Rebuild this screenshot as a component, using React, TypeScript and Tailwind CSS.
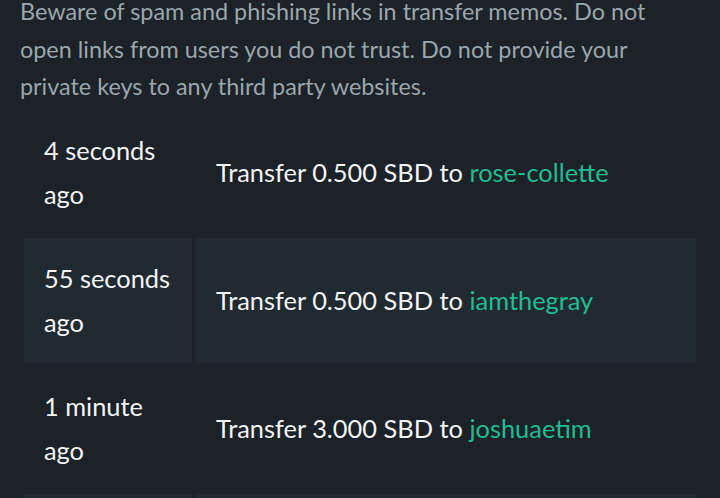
import React from 'react';

interface Transfer {
  when: string;
  amount: string;
  to: string;
}

const transfers: Transfer[] = [
  { when: '4 seconds ago', amount: '0.500 SBD', to: 'rose-collette' },
  { when: '55 seconds ago', amount: '0.500 SBD', to: 'iamthegray' },
  { when: '1 minute ago', amount: '3.000 SBD', to: 'joshuaetim' },
  { when: '2 minutes ago', amount: '1.000 SBD', to: 'steemitblog' },
];

const App: React.FC = () => {
  return (
    <div
      className="min-h-screen bg-[#1c2227] px-5 overflow-hidden"
      style={{ fontFamily: 'Lato, "Noto Sans", sans-serif' }}
    >
      <p className="-mt-[7px] text-[23.4px] leading-[37.5px] text-[#9ba6ad]">
        Beware of spam and phishing links in transfer memos. Do not open links from users you do not trust. Do not
        provide your private keys to any third party websites.
      </p>

      <div className="ml-1 mt-[4px] flex w-[672px] flex-col gap-[3px]">
        {transfers.map((t, i) => {
          const cell = i % 2 === 1 ? 'bg-[#212a30]' : 'bg-[#1c2227]';
          return (
            <div key={t.when} className="flex h-[125px] gap-[3px] text-[25.4px] leading-[44px] text-[#f2f4f5]">
              <div className={`${cell} flex w-[168px] shrink-0 items-center px-5`}>
                <span>{t.when}</span>
              </div>
              <div className={`${cell} flex flex-1 items-center pl-[21px]`}>
                <span>
                  Transfer {t.amount} to <span className="text-[#20bd93]">{t.to}</span>
                </span>
              </div>
            </div>
          );
        })}
      </div>
    </div>
  );
};

export default App;
